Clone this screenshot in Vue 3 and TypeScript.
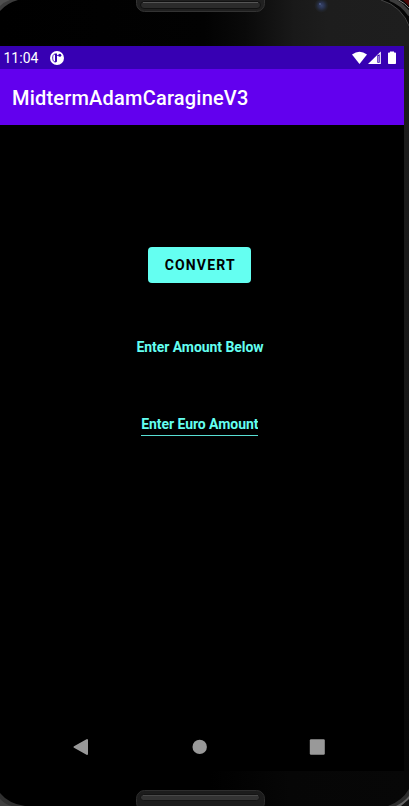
<script setup lang="ts">
import { ref } from 'vue'

const title = 'MidtermAdamCaragineV3'
const time = '11:04'
const amount = ref('')
</script>

<template>
  <div class="device">
    <svg class="bezel" width="409" height="806" viewBox="0 0 409 806" aria-hidden="true">
      <defs>
        <linearGradient id="gloss" x1="0" x2="1" y1="0" y2="0">
          <stop offset="0" stop-color="#000" />
          <stop offset="0.5" stop-color="#020202" />
          <stop offset="0.6" stop-color="#0a0a0a" />
          <stop offset="0.72" stop-color="#191919" />
          <stop offset="0.8" stop-color="#1d1d1d" />
          <stop offset="1" stop-color="#1e1e1e" />
        </linearGradient>
        <linearGradient id="side" x1="0" x2="0" y1="0" y2="1">
          <stop offset="0" stop-color="#1d1d1d" />
          <stop offset="0.5" stop-color="#161616" />
          <stop offset="1" stop-color="#060606" />
        </linearGradient>
        <linearGradient id="chin" x1="0" x2="1" y1="0" y2="0">
          <stop offset="0" stop-color="#000" />
          <stop offset="0.4" stop-color="#060606" />
          <stop offset="1" stop-color="#070707" />
        </linearGradient>
        <radialGradient id="lens">
          <stop offset="0" stop-color="#38456b" />
          <stop offset="0.4" stop-color="#2a3350" />
          <stop offset="0.75" stop-color="#20242c" />
          <stop offset="1" stop-color="#1e1e1e" />
        </radialGradient>
      </defs>
      <rect width="409" height="46" fill="url(#gloss)" />
      <rect x="404" y="46" width="5" height="725" fill="url(#side)" />
      <rect x="210" y="771" width="199" height="35" fill="url(#chin)" />
      <path d="M0 0H18Q7 3 0 11Z" fill="#3c3c3c" />
      <path d="M0 0H10Q4 2 0 6Z" fill="#505050" />
      <path d="M0 793Q9 804 25 806H0Z" fill="#303030" />
      <path d="M0 799Q6 805 12 806H0Z" fill="#404040" />
      <path d="M381 0Q402 6 409 28V0Z" fill="#050505" />
      <path d="M381 0Q402 6 410 28" fill="none" stroke="#444" />
      <path d="M390 -1Q402 3 410 15" fill="none" stroke="#3d3d3d" stroke-width="4" />
      <path d="M397 -1Q405 3 410 9" fill="none" stroke="#888" />
      <path d="M403 0H409V6Z" fill="#4a0808" />
      <path d="M388 806Q402 801 409 789V806Z" fill="#2c2c2c" />
      <path d="M396 806Q404 802 409 796V806Z" fill="#666" />
      <path d="M401 806L409 799V806Z" fill="#111" />
      <circle cx="321.500" cy="5.500" r="7" fill="url(#lens)" />
      <circle cx="320" cy="4" r="1" fill="#4d5c88" />
      <rect x="136.500" y="-9" width="128" height="20.500" rx="8" fill="#202020" stroke="#333" />
      <rect x="140.500" y="1.500" width="120" height="7" rx="3.500" fill="#2b2b2b" stroke="#111" />
      <path d="M143 2.500H258" stroke="#555" />
      <rect x="136.500" y="790.500" width="128" height="20" rx="8" fill="#1c1c1c" stroke="#2d2d2d" />
      <rect x="140.500" y="794.500" width="119" height="6" rx="3" fill="#333" stroke="#141414" />
      <path d="M143 795.500H258" stroke="#484848" />
    </svg>

    <div class="screen">
      <div class="status">
        <span class="time">{{ time }}</span>
        <svg class="notice" width="14" height="14" viewBox="0 0 14 14" aria-hidden="true">
          <circle cx="7" cy="7" r="7" fill="#fff" />
          <path d="M5 3C3.200 3.300 2.600 5 2.700 7.200C2.800 9.500 3.700 10.800 5 11" fill="none" stroke="#3700b3" stroke-width="0.900" />
          <path d="M5 2.500H7V10.500Q6.200 11.500 5 11.500Z" fill="#3700b3" />
          <path d="M6.500 5.500Q7.500 4 8.500 4.300" fill="none" stroke="#3700b3" stroke-width="1" />
          <circle cx="9.800" cy="4.200" r="1.500" fill="#3700b3" />
        </svg>
        <svg class="signals" width="45" height="14" viewBox="0 0 45 14" aria-hidden="true">
          <path d="M0 3.400Q7.500 -2 15 3.400L7.500 13Z" fill="#fff" />
          <path d="M16 13L28.800 0.500V13Z" fill="#fff" />
          <path d="M25.300 4.300V11.800H27.700V3.200Z" fill="#3700b3" />
          <path d="M26 5V11H27V5Z" fill="#9c80d9" />
          <path d="M38 0.500H42V1.500H43.200Q44 1.500 44 2.300V12.200Q44 13 43.200 13H36.800Q36 13 36 12.200V2.300Q36 1.500 36.800 1.500H38Z" fill="#fff" />
        </svg>
      </div>
      <header class="appbar"><h1>{{ title }}</h1></header>
      <main class="content">
        <button class="convert" type="button">CONVERT</button>
        <p class="label">Enter Amount Below</p>
        <input v-model="amount" class="amount" type="text" inputmode="decimal" placeholder="Enter Euro Amount" />
      </main>
      <nav class="nav">
        <svg width="16" height="18" viewBox="0 0 16 18" aria-label="Back"><path d="M14 2V16L1.500 9Z" fill="#999" stroke="#999" stroke-width="2" stroke-linejoin="round" /></svg>
        <svg width="16" height="18" viewBox="0 0 16 18" aria-label="Home"><circle cx="8.700" cy="8.900" r="7.200" fill="#999" /></svg>
        <svg width="16" height="18" viewBox="0 0 16 18" aria-label="Recents"><rect x="0.800" y="1.200" width="15" height="15.600" rx="1.200" fill="#999" /></svg>
      </nav>
    </div>
  </div>
</template>

<style>
body {
  margin: 0;
  background: #000;
}
</style>

<style scoped>
.device {
  position: relative;
  width: 409px;
  height: 806px;
  box-sizing: border-box;
  padding-top: 46px;
  overflow: hidden;
  background: #000;
  font-family: Roboto, 'Liberation Sans', sans-serif;
}
.bezel {
  position: absolute;
  left: 0;
  top: 0;
}
.screen {
  position: relative;
  display: flex;
  flex-direction: column;
  width: 404px;
  height: 725px;
  background: #000;
}
.status {
  display: flex;
  align-items: center;
  box-sizing: border-box;
  height: 23px;
  padding: 1px 7px 0 3.500px;
  background: #3700b3;
  color: #fff;
}
.time {
  width: 46.500px;
  font-size: 14px;
  line-height: 22px;
}
.signals {
  margin-left: auto;
}
.appbar {
  display: flex;
  align-items: center;
  height: 56px;
  padding-left: 12px;
  background: #6200ee;
}
h1 {
  margin: 0;
  padding-top: 2px;
  color: #fff;
  font-size: 20px;
  font-weight: 500;
  line-height: 24px;
  letter-spacing: 0.2px;
}
.content {
  display: flex;
  flex: 1;
  flex-direction: column;
  align-items: center;
  padding: 122px 5px 0 0;
}
.convert {
  width: 103.500px;
  height: 36px;
  padding: 0 0 0 1.500px;
  border: 0;
  border-radius: 4px;
  background: #64fff1;
  color: #000;
  font-family: inherit;
  font-size: 14px;
  font-weight: 700;
  letter-spacing: 1.180px;
}
.label {
  margin: 54px 0 0;
  padding-left: 1px;
  color: #64fff1;
  font-size: 14px;
  font-weight: 700;
  line-height: 20px;
  letter-spacing: -0.060px;
}
.amount {
  box-sizing: border-box;
  width: 117.500px;
  height: 22px;
  margin-top: 57px;
  padding: 0 0 1px 0.500px;
  border: 0;
  border-bottom: 1px solid #59dfd4;
  outline: 0;
  background: transparent;
  color: #64fff1;
  font-family: inherit;
  font-size: 14px;
  font-weight: 700;
  letter-spacing: -0.060px;
}
.amount::placeholder {
  color: #64fff1;
  opacity: 1;
}
.nav {
  display: flex;
  justify-content: space-between;
  align-items: center;
  height: 48px;
  padding: 0 79px 0 73px;
}
</style>
